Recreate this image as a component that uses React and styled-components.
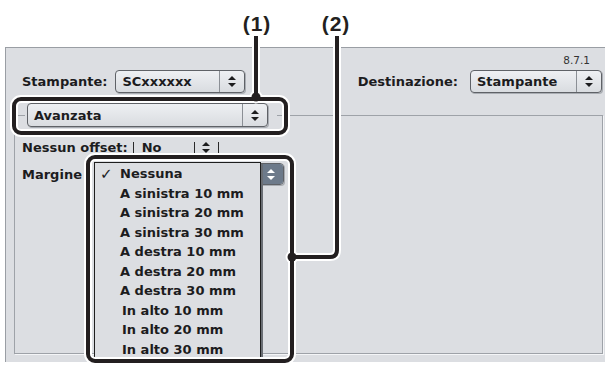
import styled, { createGlobalStyle } from "styled-components";

const GlobalStyle = createGlobalStyle`
  html, body {
    margin: 0;
    padding: 0;
    background: #ffffff;
  }
  body {
    font-family: "DejaVu Sans", "Liberation Sans", sans-serif;
    color: #1c1c1e;
  }
`

const Page = styled.div`
  position: relative;
  width: 605px;
  height: 367px;
  overflow: hidden;
  padding-top: 47px;
  box-sizing: border-box;
`

const Panel = styled.div`
  margin-left: 5px;
  width: 600px;
  height: 315px;
  box-sizing: border-box;
  background: #dcdee2;
  border-top: 1px solid #9a9ea4;
  border-left: 1px solid #9a9ea4;
  display: flex;
  flex-direction: column;
`

const Header = styled.div`
  padding: 6px 3px 0 16px;
`

const Version = styled.div`
  text-align: right;
  padding-right: 12px;
  font-size: 10.5px;
  line-height: 13px;
  color: #333;
`

const HeaderRow = styled.div`
  display: flex;
  justify-content: space-between;
  align-items: center;
  margin-top: 3px;
`

const Field = styled.div`
  display: flex;
  align-items: center;
  gap: ${(p) => p.gap}px;
`

const Label = styled.span`
  font-weight: bold;
  font-size: 13px;
  white-space: nowrap;
  width: ${(p) => (p.width ? `${p.width}px` : "auto")};
`

const PopupBox = styled.div`
  display: flex;
  align-items: stretch;
  width: ${(p) => p.width}px;
  height: ${(p) => p.height || 23}px;
  box-sizing: border-box;
  border: 1px solid #5f6267;
  border-radius: 4px;
  background: linear-gradient(#eef0f3, #d9dce0);
  box-shadow: 1px 1px 0 #a9adb3;
  font-weight: bold;
  font-size: 13px;
`

const PopupText = styled.span`
  flex: 1;
  display: flex;
  align-items: center;
  padding-left: 6px;
  white-space: nowrap;
  overflow: hidden;
`

const ArrowCell = styled.span`
  width: ${(p) => p.width || 24}px;
  display: flex;
  align-items: center;
  justify-content: center;
  border-left: 1px solid #8b8f95;
  border-radius: 0 3px 3px 0;
  background: ${(p) => (p.pressed ? "#6d7a8a" : "transparent")};
  color: ${(p) => (p.pressed ? "#ffffff" : "#1c1c1e")};
`

const UpDown = () => (
  <svg width="8" height="11" viewBox="0 0 8 11">
    <path d="M4 0 L8 4 L0 4 Z M0 7 L8 7 L4 11 Z" fill="currentColor" />
  </svg>
)

const Popup = ({ width, height, children, pressed }) => (
  <PopupBox width={width} height={height}>
    <PopupText>{children}</PopupText>
    <ArrowCell pressed={pressed}>
      <UpDown />
    </ArrowCell>
  </PopupBox>
)

const Group = styled.fieldset`
  margin: 10px 2px 0 8px;
  height: 251px;
  box-sizing: border-box;
  border: 1px solid #9ea2a8;
  box-shadow: 1px 1px 0 #f4f5f7;
  padding: 0 0 0 7px;
  min-width: 0;
`

const Legend = styled.legend`
  padding: 0 9px 0 2px;
  margin-left: 3px;
`

const Row = styled.div`
  display: flex;
  align-items: center;
  margin-top: ${(p) => p.top}px;
  height: ${(p) => p.height}px;
`

const BrokenPopup = styled.span`
  display: flex;
  align-items: center;
  width: 84px;
  height: 11px;
  margin-left: 5px;
  border-left: 1px solid #2a2a2a;
  border-right: 1px solid #2a2a2a;
  font-weight: bold;
  font-size: 13px;
`

const BrokenText = styled.span`
  flex: 1;
  padding-left: 8px;
`

const BrokenArrow = styled.span`
  width: 23px;
  height: 11px;
  display: flex;
  align-items: center;
  justify-content: center;
  border-left: 1px solid #2a2a2a;
`

const MenuAnchor = styled.div`
  position: relative;
`

const Menu = styled.ul`
  position: absolute;
  top: -1px;
  left: -1px;
  width: 167px;
  margin: 0;
  padding: 1px 0 0;
  list-style: none;
  box-sizing: border-box;
  background: #dcdee2;
  border: 1px solid #1e1e1e;
  box-shadow: 2px 2px 0 #6a6e74;
`

const Item = styled.li`
  display: flex;
  align-items: center;
  height: 19.5px;
  font-weight: bold;
  font-size: 13px;
  white-space: nowrap;
`

const Check = styled.span`
  width: ${(p) => p.indent}px;
  padding-left: 5px;
  box-sizing: border-box;
  font-size: 15px;
  font-weight: bold;
`

const Overlay = styled.div`
  position: absolute;
  inset: 0;
  pointer-events: none;
`

const CalloutLabel = styled.span`
  position: absolute;
  top: 12px;
  left: ${(p) => p.x}px;
  transform: translateX(-50%);
  font-family: "Liberation Sans", Arial, sans-serif;
  font-weight: bold;
  font-size: 21px;
  letter-spacing: 1px;
  color: #231f20;
`

const options = [
  { label: "Nessuna", checked: true },
  { label: "A sinistra 10 mm" },
  { label: "A sinistra 20 mm" },
  { label: "A sinistra 30 mm" },
  { label: "A destra 10 mm" },
  { label: "A destra 20 mm" },
  { label: "A destra 30 mm" },
  { label: "In alto 10 mm", indent: 27 },
  { label: "In alto 20 mm", indent: 27 },
  { label: "In alto 30 mm", indent: 27 },
]

const Callouts = () => {
  const shapes = (
    <>
      <rect x="14" y="99" width="272" height="34" rx="7" fill="none" />
      <path d="M256 36 V97" fill="none" />
      <rect x="88" y="157" width="204" height="204" rx="7" fill="none" />
      <path d="M337 36 V250 Q337 257 330 257 H292" fill="none" />
    </>
  )
  return (
    <Overlay>
      <svg width="605" height="367" viewBox="0 0 605 367">
        <g stroke="#ffffff" strokeWidth="8">{shapes}</g>
        <circle cx="256" cy="97" r="6.5" fill="#ffffff" />
        <circle cx="292" cy="257" r="6.5" fill="#ffffff" />
        <g stroke="#231f20" strokeWidth="4">{shapes}</g>
        <circle cx="256" cy="97" r="4.5" fill="#231f20" />
        <circle cx="292" cy="257" r="4.5" fill="#231f20" />
      </svg>
      <CalloutLabel x={257}>(1)</CalloutLabel>
      <CalloutLabel x={336}>(2)</CalloutLabel>
    </Overlay>
  )
}

const App = () => {
  return (
    <>
      <GlobalStyle />
      <Page>
        <Panel>
          <Header>
            <Version>8.7.1</Version>
            <HeaderRow>
              <Field gap={8}>
                <Label>Stampante:</Label>
                <Popup width={130}>SCxxxxxx</Popup>
              </Field>
              <Field gap={12}>
                <Label>Destinazione:</Label>
                <Popup width={132}>Stampante</Popup>
              </Field>
            </HeaderRow>
          </Header>

          <Group>
            <Legend>
              <Popup width={241} height={24}>Avanzata</Popup>
            </Legend>

            <Row top={12} height={16}>
              <Label>Nessun offset:</Label>
              <BrokenPopup>
                <BrokenText>No</BrokenText>
                <BrokenArrow>
                  <UpDown />
                </BrokenArrow>
              </BrokenPopup>
            </Row>

            <Row top={8} height={22}>
              <Label width={73}>Margine</Label>
              <MenuAnchor>
                {/* the open menu covers the button's own label */}
                <Popup width={189} height={22} pressed />
                <Menu>
                  {options.map((o) => (
                    <Item key={o.label}>
                      <Check indent={o.indent || 25}>{o.checked ? "✓" : ""}</Check>
                      {o.label}
                    </Item>
                  ))}
                </Menu>
              </MenuAnchor>
            </Row>
          </Group>
        </Panel>
        <Callouts />
      </Page>
    </>
  )
}

export default App
